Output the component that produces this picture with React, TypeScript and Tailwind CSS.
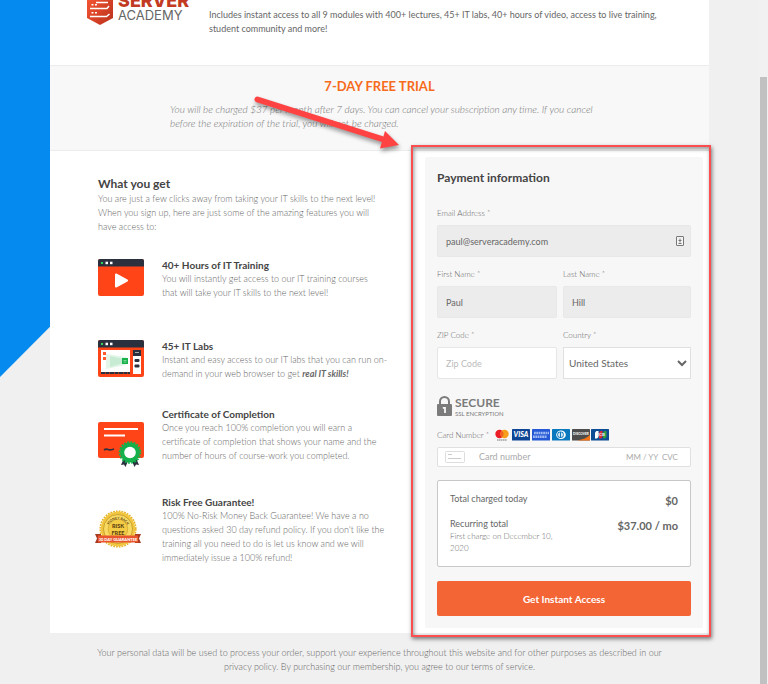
import { FC, ReactNode } from 'react'

const ShieldLogo: FC = () => (
  <svg viewBox="0 0 26 36" className="h-9 w-[26px] shrink-0" aria-hidden="true">
    <defs>
      <linearGradient id="shield" x1="0" y1="0" x2="1" y2="1">
        <stop offset="0" stopColor="#ff5a36" />
        <stop offset="1" stopColor="#b8321c" />
      </linearGradient>
    </defs>
    <path d="M0 4 13 0l13 4v25l-13 7-13-7Z" fill="url(#shield)" />
    <path d="M9 13.500h12M3 19.500h17l2-2.500M3 27.500h16.500l3-2.500" fill="none" stroke="#fff" strokeWidth="1.500" />
    <path d="M4.500 15.700h2M8 15.700h2M4.500 23.700h2M8 23.700h2" stroke="#fff" strokeWidth="1.600" />
  </svg>
)

const VideoIcon: FC = () => (
  <svg viewBox="0 0 46 37" className="h-[37px] w-[46px]" aria-hidden="true">
    <rect width="46" height="37" rx="2" fill="#ff4517" />
    <path d="M2 0h42a2 2 0 0 1 2 2v5.500H0V2a2 2 0 0 1 2-2Z" fill="#2b303e" />
    <rect x="3" y="3" width="2" height="2" fill="#2fd15c" />
    <rect x="7.500" y="2.700" width="2.500" height="2.500" fill="#fff" />
    <rect x="12" y="2.700" width="2.500" height="2.500" fill="#fff" />
    <path d="M18 15.500v12l11-6Z" fill="#fff" stroke="#fff" strokeWidth="2" strokeLinejoin="round" />
  </svg>
)

const LabIcon: FC = () => (
  <svg viewBox="0 0 46 37" className="h-[37px] w-[46px]" aria-hidden="true">
    <rect width="46" height="37" rx="2" fill="#ff4517" />
    <path d="M2 0h42a2 2 0 0 1 2 2v5.500H0V2a2 2 0 0 1 2-2Z" fill="#2b303e" />
    <rect x="3" y="3" width="2" height="2" fill="#2fd15c" />
    <rect x="7.500" y="2.700" width="2.500" height="2.500" fill="#fff" />
    <rect x="12" y="2.700" width="2.500" height="2.500" fill="#fff" />
    <rect x="3" y="10" width="29" height="22" fill="#fff" />
    <path d="M8 14l20 3v8L8 29Z" fill="#e3f6e9" />
    <path d="M12 16l14 3v4l-14 4Z" fill="#c8ecd3" />
    <rect x="24" y="18" width="6" height="6" fill="#16b14b" />
    <path d="M25.500 20.500h3M25.500 22h3" stroke="#8fe0aa" strokeWidth=".8" />
    <rect x="5" y="12" width="3" height="3" fill="#ff5a30" />
    <rect x="5" y="17" width="3" height="3" fill="#ff5a30" />
    <path d="M3 33h29" stroke="#2b303e" strokeWidth="2" strokeDasharray="4 .5" />
    <rect x="35" y="10" width="8" height="24" fill="#fff" />
    <rect x="35" y="10" width="8" height="6" fill="#2b303e" />
    <path d="M37 12.500h4" stroke="#aaa" />
    <rect x="36.500" y="19" width="5" height="3" rx="1" fill="#2b303e" />
    <rect x="36.500" y="24.500" width="5" height="3" rx="1" fill="#2b303e" />
  </svg>
)

const CertificateIcon: FC = () => (
  <svg viewBox="0 0 46 45" className="h-[45px] w-[46px]" aria-hidden="true">
    <rect width="46" height="36" rx="2" fill="#ff4517" />
    <path d="M6 7h34M6 13.500h21" stroke="#fff" strokeWidth="1.800" />
    <path d="M6 28q2-1.500 4-.5t6-.5" fill="none" stroke="#2b303e" strokeWidth="1.800" />
    <path d="m26 36-3 7 3-.5 1.500 2.500 3-7ZM38 36l3 7-3-.5-1.500 2.500-3-7Z" fill="#2b303e" />
    <circle cx="32" cy="30.500" r="10" fill="#13b04b" />
    <circle cx="32" cy="30.500" r="10.500" fill="none" stroke="#13b04b" strokeWidth="1.600" strokeDasharray="2 1.300" />
    <circle cx="32" cy="30.500" r="5.800" fill="#fff" />
  </svg>
)

const GuaranteeIcon: FC = () => (
  <svg viewBox="0 0 46 38" className="-ml-[3px] h-[38px] w-[46px]" aria-hidden="true">
    <circle cx="23" cy="19" r="17.800" fill="none" stroke="#e5b52e" strokeWidth="1.600" strokeDasharray="1.800 1" />
    <circle cx="23" cy="19" r="17.200" fill="#f1c53d" />
    <circle cx="23" cy="19" r="14.500" fill="#f8da62" stroke="#b98c22" strokeWidth=".7" />
    <circle cx="23" cy="19" r="9.800" fill="#f3cb45" stroke="#c79a2c" strokeWidth=".6" />
    <path id="arc" d="M12.500 18a10.700 10.700 0 0 1 21 0" fill="none" />
    <text fontFamily="Lato, sans-serif" fontSize="3.400" fontWeight="900" fill="#6b4a12">
      <textPath href="#arc" startOffset="50%" textAnchor="middle">MONEY BACK</textPath>
    </text>
    <text x="23" y="18" textAnchor="middle" fontFamily="Lato, sans-serif" fontSize="5.500" fontWeight="900" fill="#5d4010">RISK</text>
    <text x="23" y="24.500" textAnchor="middle" fontFamily="Lato, sans-serif" fontSize="5.500" fontWeight="900" fill="#5d4010">FREE</text>
    <path d="M0 24h6v9H0l2-4.500ZM46 24h-6v9h6l-2-4.500Z" fill="#a93a22" />
    <path d="M3 25.500h40v7H3Z" fill="#e8552f" />
    <text x="23" y="30.500" textAnchor="middle" fontFamily="Lato, sans-serif" fontSize="4" fontWeight="900" fill="#fff">30 DAY GUARANTEE</text>
  </svg>
)

const CardBrands: FC = () => (
  <svg viewBox="0 0 114 12" className="h-3 w-[114px]" role="img" aria-label="Accepted cards">
    <circle cx="4.500" cy="5" r="4.200" fill="#eb1c26" />
    <circle cx="9.500" cy="5" r="4.200" fill="#f79f1a" />
    <path d="M7 1.700a4.200 4.200 0 0 1 0 6.600 4.200 4.200 0 0 1 0-6.600Z" fill="#f26322" />
    <path d="M2 11h10" stroke="#777" strokeWidth="1" strokeDasharray="1.500 .4" />
    <rect x="17" width="18" height="11.500" rx=".6" fill="#0e4595" />
    <text x="26" y="8.400" textAnchor="middle" fontFamily="Lato, sans-serif" fontSize="7" fontWeight="900" fontStyle="italic" fill="#fff">VISA</text>
    <rect x="37" width="18" height="11.500" rx=".6" fill="#2558d4" />
    <path d="M39 4h15M38 7.800h14" stroke="#9db8f3" strokeWidth="2.600" strokeDasharray="1.800 .5" />
    <rect x="57" width="18" height="11.500" rx=".6" fill="#0a79be" />
    <ellipse cx="66" cy="5.800" rx="4.800" ry="4.300" fill="#fff" />
    <circle cx="65.500" cy="5.800" r="3.300" fill="#0a79be" />
    <path d="M64.800 3.300v5a2.700 2.700 0 0 1 0-5ZM66.200 3.300v5a2.700 2.700 0 0 0 0-5Z" fill="#fff" />
    <rect x="77" width="18" height="11.500" rx=".6" fill="#4d4d4d" />
    <path d="M95 6v5.500H82Q91 10 95 6Z" fill="#f47216" />
    <text x="86" y="6.400" textAnchor="middle" fontFamily="Lato, sans-serif" fontSize="3.200" fontWeight="900" fill="#fff">DISCOVER</text>
    <rect x="96" width="18" height="11.500" rx=".6" fill="#0e4c96" />
    <path d="M100 3.500 101.500 2h2v6l-1.500 1.500h-2Z" fill="#fff" />
    <path d="M104 3.500 105.500 2h2v6l-1.500 1.500h-2Z" fill="#e02a34" />
    <path d="M108 3.500 109.500 2h2v6l-1.500 1.500h-2Z" fill="#2f9b3e" />
    <text x="106" y="7.300" textAnchor="middle" fontFamily="Lato, sans-serif" fontSize="4.500" fontWeight="900" fill="#dbe7f5">JCB</text>
  </svg>
)

const SecureBadge: FC = () => (
  <div className="mt-4 flex h-[22px] items-center gap-[3px] text-[#7b7b7b]">
    <svg viewBox="0 0 15 20" className="h-5 w-[15px]" aria-hidden="true">
      <path d="M3 9V5.500a4.500 4.500 0 0 1 9 0V9" fill="none" stroke="currentColor" strokeWidth="2" />
      <rect y="8" width="15" height="12" rx="1" fill="currentColor" />
      <path d="M5.800 11.800h2.200v5.200" fill="none" stroke="#f7f7f7" strokeWidth="1.800" />
    </svg>
    <div>
      <div className="text-[12px] leading-[14px] font-bold">SECURE</div>
      <div className="text-[6px] leading-[7px]">SSL ENCRYPTION</div>
    </div>
  </div>
)

type FeatureProps = {
  icon: ReactNode
  title: string
  className: string
  iconClassName: string
  children: ReactNode
}

const Feature: FC<FeatureProps> = ({ icon, title, className, iconClassName, children }) => (
  <li className={`flex items-start ${className}`}>
    <div className={`w-16 shrink-0 ${iconClassName}`}>{icon}</div>
    <div className="min-w-0 flex-1">
      <h3 className="font-bold text-[#444]">{title}</h3>
      <p className="text-[9px] font-light text-[#666]">{children}</p>
    </div>
  </li>
)

type FieldProps = {
  id: string
  label: string
  children: ReactNode
}

const Field: FC<FieldProps> = ({ id, label, children }) => (
  <div>
    <label htmlFor={id} className="mb-1 block text-[8px] leading-4 font-light text-[#666]">{label} *</label>
    {children}
  </div>
)

const filledInput = 'h-8 w-full rounded-[2px] border border-[#e8e8e8] bg-[#ececec] px-2 text-[9px] text-[#666]'

const PaymentForm: FC = () => (
  <form className="rounded-[2px] bg-[#f7f7f7] px-3 pt-3 pb-3" onSubmit={(e) => e.preventDefault()}>
    <h2 className="text-[12px] leading-[18px] font-bold text-[#444]">Payment information</h2>
    <div className="mt-[18px] space-y-[9px]">
      <Field id="email" label="Email Address">
        <div className="relative">
          <input id="email" type="email" defaultValue="paul@serveracademy.com" className={filledInput} />
          <svg viewBox="0 0 8 10" className="absolute top-[11px] right-[7px] h-[10px] w-2" aria-hidden="true">
            <rect x=".5" y=".5" width="7" height="9" rx=".5" fill="#f4f4f4" stroke="#777" />
            <path d="M4 2.500v4M2.500 4.500h3M2.500 7.500h3" stroke="#777" />
          </svg>
        </div>
      </Field>
      <div className="grid grid-cols-[1fr_128px] gap-x-[6px] gap-y-[9px]">
        <Field id="first" label="First Name">
          <input id="first" type="text" defaultValue="Paul" className={filledInput} />
        </Field>
        <Field id="last" label="Last Name">
          <input id="last" type="text" defaultValue="Hill" className={filledInput} />
        </Field>
        <Field id="zip" label="ZIP Code">
          <input
            id="zip"
            type="text"
            placeholder="Zip Code"
            className="h-8 w-full rounded-[2px] border border-[#e6e6e6] bg-white px-2 text-[9px] placeholder:text-[#bbb]"
          />
        </Field>
        <Field id="country" label="Country">
          <select id="country" className="h-8 w-full border border-[#e0e0e0] bg-white px-px text-[10px] text-[#666]">
            <option>United States</option>
            <option>Canada</option>
          </select>
        </Field>
      </div>
    </div>

    <SecureBadge />

    <div className="mt-[10px] flex items-center gap-[6px]">
      <label htmlFor="card" className="text-[8px] leading-4 font-light text-[#666]">Card Number *</label>
      <CardBrands />
    </div>
    <div className="mt-1 flex h-5 items-center rounded-[2px] border border-[#e0e0e0] bg-white pr-3 pl-[7px] text-[8px]">
      <svg viewBox="0 0 20 12" className="mr-[14px] h-3 w-5 shrink-0" aria-hidden="true">
        <rect x=".5" y=".5" width="19" height="11" rx="1" fill="#fff" stroke="#ddd" />
        <path d="M3 3.500h4M3 7.500h13" stroke="#ccc" />
      </svg>
      <input
        id="card"
        type="text"
        placeholder="Card number"
        className="min-w-0 flex-1 text-[9px] placeholder:text-[#aaa]"
      />
      <input type="text" aria-label="Expiry date" placeholder="MM / YY" className="w-9 placeholder:text-[#aaa]" />
      <input type="text" aria-label="CVC" placeholder="CVC" className="w-4 placeholder:text-[#aaa]" />
    </div>

    <dl className="mt-[13px] rounded-[2px] border border-[#c8c8c8] bg-white px-3 py-3 text-[#666]">
      <div className="flex justify-between">
        <dt className="text-[9px] leading-3">Total charged today</dt>
        <dd className="text-[11px] leading-4 font-bold">$0</dd>
      </div>
      <div className="mt-[9px] flex justify-between">
        <dt className="w-[110px] text-[9px] leading-3">
          Recurring total
          <span className="block text-[8px] font-light">First charge on December 10, 2020</span>
        </dt>
        <dd className="text-[11px] leading-4 font-bold">$37.00 / mo</dd>
      </div>
    </dl>

    <button type="submit" className="mt-[14px] h-[35px] w-full rounded-[2px] bg-[#f36535] text-[10px] font-bold text-white">
      Get Instant Access
    </button>
  </form>
)

export default function App() {
  return (
    <div className="relative flex min-h-screen overflow-hidden bg-[#f0f0f0] font-[Lato,sans-serif] text-[10px] leading-[14px] text-[#777]">
      <svg viewBox="0 0 400 377" className="absolute top-0 left-0 h-[377px] w-[400px]" aria-hidden="true">
        <path d="M0 0h375L0 377Z" fill="#058bef" />
      </svg>

      <div className="relative min-w-0 flex-1 px-[50px]">
        <div className="bg-white">
          <header className="flex items-start pb-[29px] pl-[37px]">
            <div className="-mt-[11px] -mb-6 flex w-[122px] shrink-0 gap-[5px] font-[Inter,sans-serif]">
              <ShieldLogo />
              <div className="pt-[5px]">
                <div className="text-[18px] leading-[14px] font-extrabold text-[#c23a22]">SERVER</div>
                <div className="text-[13px] leading-[14px] text-[#666]">ACADEMY</div>
              </div>
            </div>
            <p className="pt-2 pr-6 text-[9px] text-[#666]">
              Includes instant access to all 9 modules with 400+ lectures, 45+ IT labs, 40+ hours of video, access to
              live training,
              <br />
              student community and more!
            </p>
          </header>

          <section className="relative border-y border-[#ececec] bg-[#f8f8f8] px-[120px] pt-[10px] pb-5">
            <h1 className="text-center text-[13px] leading-5 font-bold text-[#f76b1c]">7-DAY FREE TRIAL</h1>
            <p className="-mr-4 mt-[6px] font-light italic">
              You will be charged $37 per month after 7 days. You can cancel your subscription any time. If you cancel
              <br />
              before the expiration of the trial, you will not be charged.
            </p>
            <svg
              viewBox="0 0 160 70"
              className="absolute top-[26px] left-[200px] h-[70px] w-[160px] drop-shadow-[1px_3px_2px_rgba(0,0,0,0.4)]"
              aria-hidden="true"
            >
              <path d="M7.500 7.500 132 47" stroke="#ff4343" strokeWidth="6" strokeLinecap="round" />
              <path d="m135 39 14 14-19 3.500Z" fill="#ff4343" />
            </svg>
          </section>

          <div className="flex items-start pr-[6px] pb-[5px]">
            <section className="min-w-0 flex-1 pt-[26px] pr-8 pl-12">
              <h2 className="text-[12px] leading-[14px] font-bold text-[#444]">What you get</h2>
              <p className="mt-px text-[9px] font-light text-[#666]">
                You are just a few clicks away from taking your IT skills to the next level!
                <br />
                When you sign up, here are just some of the amazing features you will
                <br />
                have access to:
              </p>
              <ul>
                <Feature icon={<VideoIcon />} title="40+ Hours of IT Training" className="mt-6" iconClassName="pt-px">
                  You will instantly get access to our IT training courses
                  <br />
                  that will take your IT skills to the next level!
                </Feature>
                <Feature icon={<LabIcon />} title="45+ IT Labs" className="mt-[39px]" iconClassName="pt-px">
                  Instant and easy access to our IT labs that you can run on-demand in your web browser to get{' '}
                  <em className="font-bold">real IT skills!</em>
                </Feature>
                <Feature
                  icon={<CertificateIcon />}
                  title="Certificate of Completion"
                  className="mt-[26px]"
                  iconClassName="pt-[15px]"
                >
                  Once you reach 100% completion you will earn a<br />
                  certificate of completion that shows your name and the number of hours of course-work you completed.
                </Feature>
                <Feature
                  icon={<GuaranteeIcon />}
                  title="Risk Free Guarantee!"
                  className="mt-7"
                  iconClassName="pt-[15px]"
                >
                  100% No-Risk Money Back Guarantee! We have a no questions asked 30 day refund policy. If you don't
                  like the training all you need to do is let us know and we will immediately issue a 100% refund!
                </Feature>
              </ul>
            </section>

            <aside className="relative w-[278px] shrink-0 pt-[6px]">
              <PaymentForm />
              <div className="pointer-events-none absolute -top-[6px] -right-2 -bottom-[9px] -left-[14px] border-2 border-[#f94f4f] shadow-[1px_2px_4px_rgba(0,0,0,0.5),inset_1px_2px_4px_rgba(0,0,0,0.4)]" />
            </aside>
          </div>
        </div>

        <footer className="px-10 py-[13px] text-center text-[9px] font-light text-[#666]">
          Your personal data will be used to process your order, support your experience throughout this website and for
          other purposes as described in our privacy policy. By purchasing our membership, you agree to our terms of
          service.
        </footer>
      </div>

      <div className="relative w-[9px] shrink-0 bg-[#f1f1f1] pt-[77px] pl-px">
        <div className="h-full w-[7px] bg-[#c1c1c1]" />
      </div>
    </div>
  )
}
